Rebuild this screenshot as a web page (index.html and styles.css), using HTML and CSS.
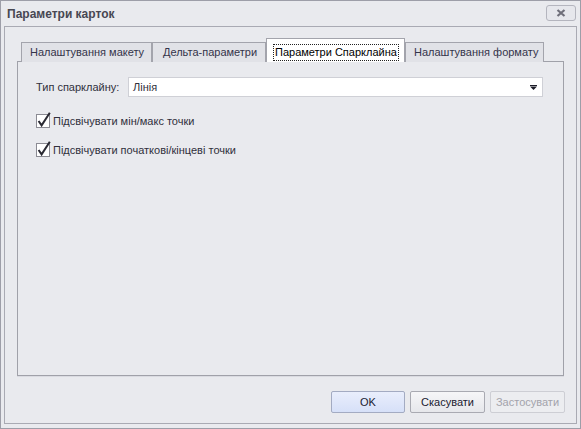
FILE: index.html
```html
<!DOCTYPE html>
<html>
<head>
    <title>Параметри карток</title>
    <link rel="stylesheet" href="styles.css">
</head>
<body>
    <div class="window">
        <div class="titlebar">
            <span class="title">Параметри карток</span>
            <button class="close" title="Закрити">
                <svg width="10" height="8" viewBox="0 0 10 8"><path d="M1.5 1 L8.5 7 M8.5 1 L1.5 7" stroke="#6f6f7a" stroke-width="2.2"/></svg>
            </button>
        </div>

        <div class="client">
            <div class="tabs">
                <div class="tab tab-layout">Налаштування макету</div>
                <div class="tab tab-delta">Дельта-параметри</div>
                <div class="tab tab-spark active"><span class="focus">Параметри Спарклайна</span></div>
                <div class="tab tab-format">Налаштування формату</div>
            </div>

            <div class="panel">
                <div class="field">
                    <label class="field-label">Тип спарклайну:</label>
                    <div class="combo">
                        <span>Лінія</span>
                        <svg class="combo-arrow" width="7" height="5" viewBox="0 0 7 5"><rect x="0" y="0" width="7" height="1" fill="#1c1c28"/><path d="M0 1.5 H7 L3.5 5 Z" fill="#1c1c28"/></svg>
                    </div>
                </div>

                <label class="check first">
                    <svg class="box" width="15" height="16" viewBox="0 0 15 16"><rect x="0.5" y="2.5" width="13" height="13" fill="#fff" stroke="#8b8b93"/><path d="M2.6 9 L5.6 13.4 L13.8 0.8" fill="none" stroke="#2a2a33" stroke-width="2"/></svg>
                    Підсвічувати мін/макс точки
                </label>
                <label class="check">
                    <svg class="box" width="15" height="16" viewBox="0 0 15 16"><rect x="0.5" y="2.5" width="13" height="13" fill="#fff" stroke="#8b8b93"/><path d="M2.6 9 L5.6 13.4 L13.8 0.8" fill="none" stroke="#2a2a33" stroke-width="2"/></svg>
                    Підсвічувати початкові/кінцеві точки
                </label>
            </div>

            <div class="buttons">
                <button class="btn default">OK</button>
                <button class="btn">Скасувати</button>
                <button class="btn" disabled>Застосувати</button>
            </div>
        </div>
    </div>
</body>
</html>
```

FILE: styles.css
```css
body { margin: 0; font-family: "Liberation Sans", Arial, sans-serif; font-size: 11px; color: #30303c; }

.window { width: 581px; height: 429px; box-sizing: border-box; border: 1px solid #9d9ea8; background: #e9eaee; padding: 0 3px 4px 3px; display: flex; flex-direction: column; }

.titlebar { height: 25px; display: flex; align-items: center; justify-content: space-between; padding: 0 1px 0 3px; }
.title { font-size: 12px; font-weight: bold; color: #474752; }
.close { width: 30px; height: 16px; margin-top: -1px; border: 1px solid #b4b5be; border-radius: 3px; background: #e6e7ec; display: flex; align-items: center; justify-content: center; padding: 0; }

.client { flex: 1; border: 1px solid #a9aab3; padding: 11px 12px 10px 12px; display: flex; flex-direction: column; }

.tabs { display: flex; align-items: flex-end; height: 24px; padding-left: 4px; margin-bottom: -1px; position: relative; z-index: 1; }
.tab { box-sizing: border-box; height: 20px; border: 1px solid #a3a4ac; border-bottom: none; background: #e1e2e7; padding: 3px 0 0 8px; color: #34344a; white-space: nowrap; }
.tab-layout { width: 131px; }
.tab-delta { width: 114px; padding-left: 10px; }
.tab-spark { width: 139px; }
.tab-format { width: 139px; }
.tab.active { height: 24px; background: #fff; border-color: #a3a4ac; padding: 5px 0 0 6px; color: #000; }
.focus { display: inline-block; border: 1px dotted #222; padding: 1px 1px 1px 1px; line-height: 13px; }

.panel { flex: 1; border: 1px solid #a0a1a9; background: #e9eaee; box-shadow: 0 1px 0 #dadbe1; padding: 15px 20px 0 18px; margin-bottom: 15px; }

.field { display: flex; align-items: center; height: 20px; }
.field-label { width: 92px; }
.combo { flex: 1; box-sizing: border-box; height: 20px; border: 1px solid #cfd0d6; background: #fff; display: flex; align-items: center; justify-content: space-between; padding: 0 5px 0 4px; color: #30303c; }
.combo-arrow { margin-top: 1px; }

.check { display: flex; align-items: center; height: 16px; gap: 2px; margin-top: 13px; }
.check.first { margin-top: 16px; }
.check .box { flex: none; margin-top: -3px; }

.buttons { display: flex; justify-content: flex-end; gap: 5px; margin-right: -1px; }
.btn { width: 75px; height: 22px; border: 1px solid #a9aab2; border-radius: 2px; background: linear-gradient(#f6f6f8, #e6e7eb); font-family: "Liberation Sans", Arial, sans-serif; font-size: 11px; color: #202030; padding: 0; }
.btn.default { width: 74px; border-color: #a3abc2; background: linear-gradient(#e9eefc, #d6e0f8); }
.btn:disabled { border-color: #cdced4; background: #ecedf0; color: #a3a3ab; }
```
